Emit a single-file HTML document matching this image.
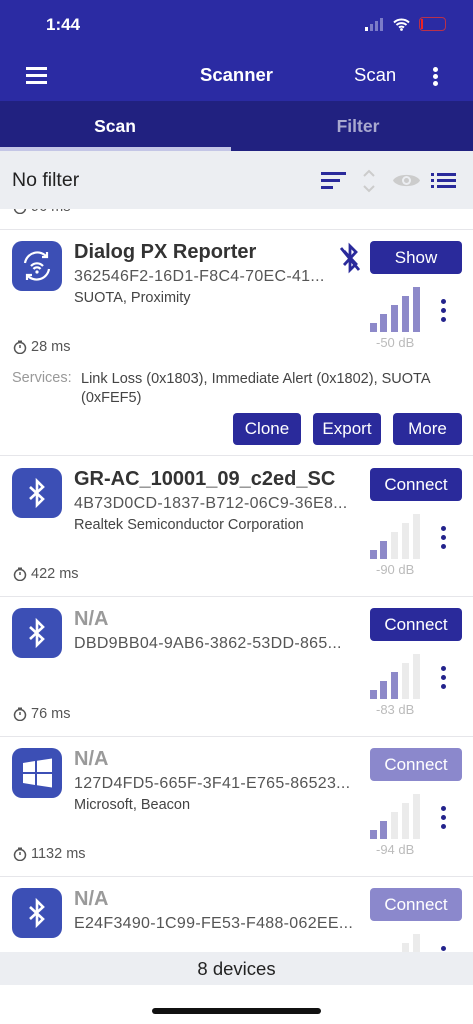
<!DOCTYPE html>
<html><head><meta charset="utf-8"><style>
*{margin:0;padding:0;box-sizing:border-box}
body{width:473px;height:1024px;position:relative;overflow:hidden;background:#fff;font-family:"Liberation Sans",sans-serif;color:#333}
.a{position:absolute}
.top{left:0;top:0;width:473px;height:101px;background:#2b2ba3}
.tabs{left:0;top:101px;width:473px;height:50px;background:#212180}
.fbar{left:0;top:151px;width:473px;height:58px;background:#eceef2}
.row{left:0;width:473px;border-bottom:1px solid #e6e6ea}
.ic{left:12px;width:50px;height:50px;border-radius:10px;background:#3c4fb5}
.nm{left:74px;font-size:20px;font-weight:bold;color:#333}
.na{color:#9a9a9a}
.uu{left:74px;font-size:16px;color:#555;letter-spacing:.3px}
.sv{left:74px;font-size:14.5px;color:#444}
.btn{left:370px;width:92px;height:33px;border-radius:4px;background:#2a2a9b;color:#fff;font-size:17px;text-align:center;line-height:33px}
.btn.l{background:#8b88cc}
.tm{left:31px;font-size:14.5px;color:#555}
.tmi{left:13px;width:14px;height:14px}
.db{left:376px;font-size:13px;color:#bbb}
.dots{left:441px;width:5px}
.dots i{display:block;width:5px;height:5px;border-radius:50%;background:#23238c;margin-bottom:4px}
.sb{width:7px;background:#ebebeb}
.sb.on{background:#8d89c9}
.sbtn{top:413px;height:32px;border-radius:4px;background:#2a2a9b;color:#fff;font-size:17px;text-align:center;line-height:32px}
</style></head><body>
<svg width="0" height="0" style="position:absolute"><defs><g id="tmr"><circle cx="7" cy="8" r="5.5" stroke="#555" stroke-width="1.5" fill="none"/><path d="M5 1.2h4M7 8V5" stroke="#555" stroke-width="1.5"/></g></defs></svg>
<div class="a top"></div>
<div class="a" style="left:46px;top:15px;color:#fff;font-size:17px;font-weight:bold">1:44</div>
<div class="a" style="left:365px;top:27px;width:3px;height:4px;background:#fff"></div>
<div class="a" style="left:370px;top:24px;width:3px;height:7px;background:#7b7bc8"></div>
<div class="a" style="left:375px;top:21px;width:3px;height:10px;background:#7b7bc8"></div>
<div class="a" style="left:380px;top:18px;width:3px;height:13px;background:#7b7bc8"></div>
<svg class="a" style="left:393px;top:18px" width="17" height="13" viewBox="0 0 17 13"><path d="M1 4.5a11 11 0 0 1 15 0M3.5 7a7.5 7.5 0 0 1 10 0M6 9.5a4 4 0 0 1 5 0" stroke="#fff" stroke-width="2" fill="none"/><circle cx="8.5" cy="11.5" r="1.4" fill="#fff"/></svg>
<div class="a" style="left:419px;top:17px;width:27px;height:14px;border:1.5px solid #d33;border-radius:4px;opacity:.8"></div>
<div class="a" style="left:421px;top:19px;width:2px;height:10px;background:#e22"></div>
<div class="a" style="left:26px;top:67px;width:21px;height:3px;background:#fff;box-shadow:0 7px 0 #fff,0 14px 0 #fff"></div>
<div class="a" style="left:0;width:473px;top:64px;text-align:center;color:#fff;font-size:18.5px;font-weight:bold">Scanner</div>
<div class="a" style="left:354px;top:64px;color:#fff;font-size:18.5px">Scan</div>
<div class="a" style="left:433px;top:67px;width:5px;height:5px;border-radius:50%;background:#fff;box-shadow:0 7px 0 #fff,0 14px 0 #fff"></div>
<div class="a tabs"></div>
<div class="a" style="left:0;width:230px;top:116px;text-align:center;color:#fff;font-size:17.5px;font-weight:bold">Scan</div>
<div class="a" style="left:243px;width:230px;top:116px;text-align:center;color:#a9a9cf;font-size:17.5px;font-weight:bold">Filter</div>
<div class="a" style="left:0;top:147px;width:231px;height:4px;background:#c4c6e6"></div>
<!-- partial row -->
<div class="a row" style="top:151px;height:79px"></div>
<svg class="a tmi" style="top:200px" viewBox="0 0 14 14"><use href="#tmr"/></svg>
<div class="a tm" style="top:199px">96 ms</div>
<div class="a fbar" style="z-index:1"></div>
<div class="a" style="left:12px;top:169px;font-size:19.5px;color:#222;z-index:2">No filter</div>
<div class="a" style="left:321px;top:172px;width:25px;height:3px;background:#2a2a9b;z-index:2"></div>
<div class="a" style="left:321px;top:179px;width:19px;height:3px;background:#2a2a9b;z-index:2"></div>
<div class="a" style="left:321px;top:186px;width:12px;height:3px;background:#2a2a9b;z-index:2"></div>
<svg class="a" style="left:362px;top:169px;z-index:2" width="14" height="24" viewBox="0 0 14 24"><path d="M2 7l5-5 5 5M2 17l5 5 5-5" stroke="#ccc" stroke-width="2" fill="none"/></svg>
<svg class="a" style="left:392px;top:171px;z-index:2" width="29" height="19" viewBox="0 0 29 19"><path d="M1 9.5C5 2 24 2 28 9.5 24 17 5 17 1 9.5z" fill="#ccc"/><circle cx="14.5" cy="9.5" r="4.5" fill="#eceef2"/><circle cx="14.5" cy="9.5" r="2.5" fill="#ccc"/></svg>
<div class="a" style="left:431px;top:173px;width:3px;height:3px;background:#2a2a9b;box-shadow:0 6px 0 #2a2a9b,0 12px 0 #2a2a9b;z-index:2"></div>
<div class="a" style="left:437px;top:173px;width:19px;height:3px;background:#2a2a9b;box-shadow:0 6px 0 #2a2a9b,0 12px 0 #2a2a9b;z-index:2"></div>

<!-- card 1 -->
<div class="a row" style="top:230px;height:226px"></div>
<div class="a ic" style="top:241px"></div>
<svg class="a" style="left:12px;top:241px" width="50" height="50" viewBox="0 0 50 50"><g stroke="#fff" stroke-width="2.2" fill="none"><path d="M13 22a12.5 12.5 0 0 1 22-6M37 28a12.5 12.5 0 0 1-22 6"/><path d="M35 11v5h-5M15 39v-5h5"/><path d="M19 25a8 8 0 0 1 12 0M21.5 28a4.5 4.5 0 0 1 7 0"/></g><circle cx="25" cy="31" r="1.6" fill="#fff"/></svg>
<div class="a nm" style="top:241px">Dialog PX Reporter</div>
<div class="a uu" style="top:268px">362546F2-16D1-F8C4-70EC-41...</div>
<div class="a sv" style="top:290px">SUOTA, Proximity</div>
<svg class="a" style="left:338px;top:242px" width="24" height="32" viewBox="0 0 24 32"><path d="M6 9l12 13-6 6V4l6 6-12 13M3 6l18 22" stroke="#2a2a9b" stroke-width="2.8" fill="none"/></svg>
<div class="a btn" style="top:241px">Show</div>
<div class="a sb on" style="left:370px;top:323px;height:9px"></div>
<div class="a sb on" style="left:380px;top:314px;height:18px"></div>
<div class="a sb on" style="left:391px;top:305px;height:27px"></div>
<div class="a sb on" style="left:402px;top:296px;height:36px"></div>
<div class="a sb on" style="left:413px;top:287px;height:45px"></div>
<div class="a db" style="top:335px">-50 dB</div>
<div class="a dots" style="top:299px"><i></i><i></i><i></i></div>
<svg class="a tmi" style="top:340px" viewBox="0 0 14 14"><use href="#tmr"/></svg>
<div class="a tm" style="top:339px">28 ms</div>
<div class="a" style="left:12px;top:370px;font-size:14.5px;color:#999">Services:</div>
<div class="a" style="left:81px;top:370px;width:390px;font-size:14.5px;color:#444;line-height:19px">Link Loss (0x1803), Immediate Alert (0x1802), SUOTA (0xFEF5)</div>
<div class="a sbtn" style="left:233px;width:68px">Clone</div>
<div class="a sbtn" style="left:313px;width:68px">Export</div>
<div class="a sbtn" style="left:393px;width:69px">More</div>

<!-- rows -->
<div class="a row" style="top:456px;height:141px"></div>
<div class="a ic" style="top:468px"></div>
<svg class="a" style="left:12px;top:468px" width="50" height="50" viewBox="0 0 50 50"><path d="M18 19l13 12-6 6V13l6 6-13 12" stroke="#fff" stroke-width="2.6" fill="none"/></svg>
<div class="a nm" style="top:468px">GR-AC_10001_09_c2ed_SC</div>
<div class="a uu" style="top:495px">4B73D0CD-1837-B712-06C9-36E8...</div>
<div class="a sv" style="top:517px">Realtek Semiconductor Corporation</div>
<div class="a btn" style="top:468px">Connect</div>
<div class="a sb on" style="left:370px;top:550px;height:9px"></div>
<div class="a sb on" style="left:380px;top:541px;height:18px"></div>
<div class="a sb" style="left:391px;top:532px;height:27px"></div>
<div class="a sb" style="left:402px;top:523px;height:36px"></div>
<div class="a sb" style="left:413px;top:514px;height:45px"></div>
<div class="a db" style="top:562px">-90 dB</div>
<div class="a dots" style="top:526px"><i></i><i></i><i></i></div>
<svg class="a tmi" style="top:567px" viewBox="0 0 14 14"><use href="#tmr"/></svg>
<div class="a tm" style="top:566px">422 ms</div>

<div class="a row" style="top:597px;height:140px"></div>
<div class="a ic" style="top:608px"></div>
<svg class="a" style="left:12px;top:608px" width="50" height="50" viewBox="0 0 50 50"><path d="M18 19l13 12-6 6V13l6 6-13 12" stroke="#fff" stroke-width="2.6" fill="none"/></svg>
<div class="a nm na" style="top:608px">N/A</div>
<div class="a uu" style="top:635px">DBD9BB04-9AB6-3862-53DD-865...</div>
<div class="a btn" style="top:608px">Connect</div>
<div class="a sb on" style="left:370px;top:690px;height:9px"></div>
<div class="a sb on" style="left:380px;top:681px;height:18px"></div>
<div class="a sb on" style="left:391px;top:672px;height:27px"></div>
<div class="a sb" style="left:402px;top:663px;height:36px"></div>
<div class="a sb" style="left:413px;top:654px;height:45px"></div>
<div class="a db" style="top:702px">-83 dB</div>
<div class="a dots" style="top:666px"><i></i><i></i><i></i></div>
<svg class="a tmi" style="top:707px" viewBox="0 0 14 14"><use href="#tmr"/></svg>
<div class="a tm" style="top:706px">76 ms</div>

<div class="a row" style="top:737px;height:140px"></div>
<div class="a ic" style="top:748px"></div>
<svg class="a" style="left:12px;top:748px" width="50" height="50" viewBox="0 0 50 50"><path d="M11 15l12-2v11H11zM25 12.7l15-2.2V24H25zM11 26h12v11l-12-2zM25 26h15v13.5l-15-2.2z" fill="#fff"/></svg>
<div class="a nm na" style="top:748px">N/A</div>
<div class="a uu" style="top:775px">127D4FD5-665F-3F41-E765-86523...</div>
<div class="a sv" style="top:797px">Microsoft, Beacon</div>
<div class="a btn l" style="top:748px">Connect</div>
<div class="a sb on" style="left:370px;top:830px;height:9px"></div>
<div class="a sb on" style="left:380px;top:821px;height:18px"></div>
<div class="a sb" style="left:391px;top:812px;height:27px"></div>
<div class="a sb" style="left:402px;top:803px;height:36px"></div>
<div class="a sb" style="left:413px;top:794px;height:45px"></div>
<div class="a db" style="top:842px">-94 dB</div>
<div class="a dots" style="top:806px"><i></i><i></i><i></i></div>
<svg class="a tmi" style="top:847px" viewBox="0 0 14 14"><use href="#tmr"/></svg>
<div class="a tm" style="top:846px">1132 ms</div>

<div class="a ic" style="top:888px"></div>
<svg class="a" style="left:12px;top:888px" width="50" height="50" viewBox="0 0 50 50"><path d="M18 19l13 12-6 6V13l6 6-13 12" stroke="#fff" stroke-width="2.6" fill="none"/></svg>
<div class="a nm na" style="top:888px">N/A</div>
<div class="a uu" style="top:915px">E24F3490-1C99-FE53-F488-062EE...</div>
<div class="a btn l" style="top:888px">Connect</div>
<div class="a sb" style="left:402px;top:943px;height:20px"></div>
<div class="a sb" style="left:413px;top:934px;height:30px"></div>
<div class="a dots" style="top:946px"><i></i></div>

<div class="a" style="left:0;top:952px;width:473px;height:33px;background:#eceef2;text-align:center;font-size:18.5px;color:#222;line-height:33px">8 devices</div>
<div class="a" style="left:0;top:985px;width:473px;height:39px;background:#fff"></div>
<div class="a" style="left:152px;top:1008px;width:169px;height:6px;border-radius:3px;background:#111"></div>
</body></html>
